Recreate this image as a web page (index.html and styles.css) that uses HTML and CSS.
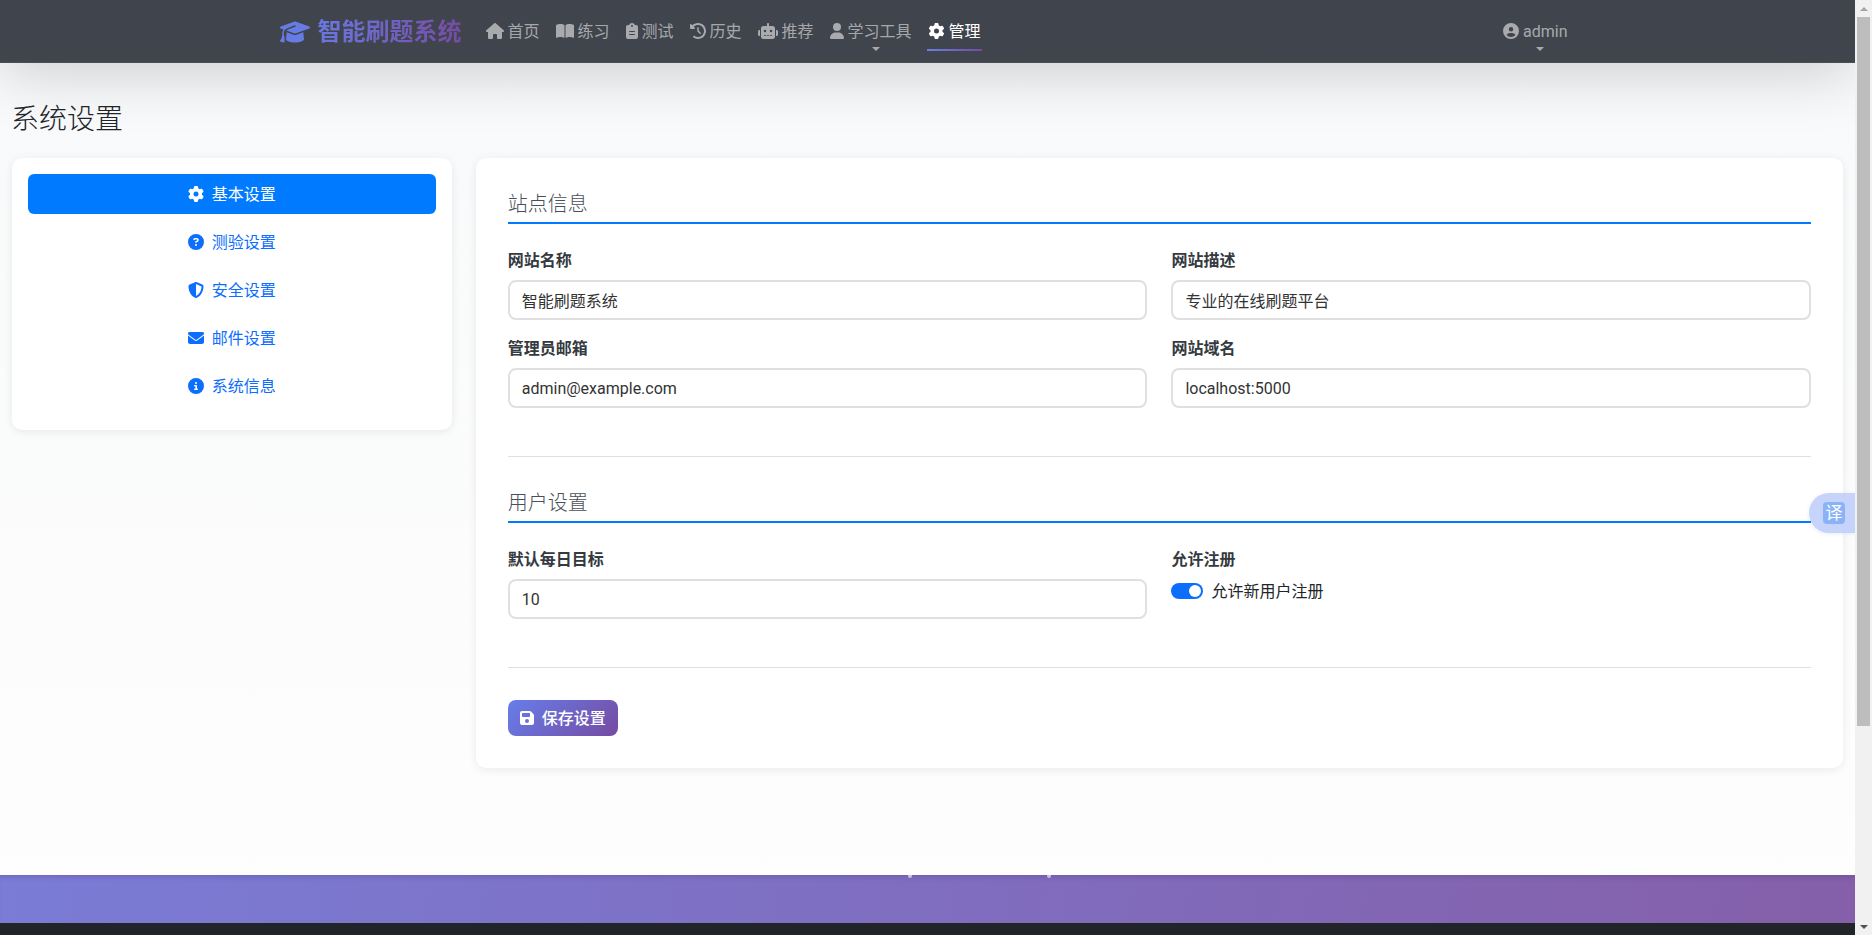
FILE: index.html
```html
<!DOCTYPE html>
<html lang="zh-CN">
<head>
<meta charset="utf-8">
<title>系统设置 - 智能刷题系统</title>
<link rel="stylesheet" href="styles.css">
</head>
<body>
<div class="shell">
  <div class="page">
    <header class="navbar">
      <div class="nav-container">
        <a class="brand" href="#">
          <svg class="brand-icon" viewBox="0 0 640 512"><path d="M320 32c-8.1 0-16.1 1.4-23.7 4.1L15.8 137.4C6.3 140.9 0 149.9 0 160s6.3 19.1 15.8 22.6l57.9 20.9C57.3 229.3 48 259.8 48 291.9v28.1c0 28.4-10.8 57.7-22.3 80.8c-6.5 13-13.9 25.8-22.5 37.6C0 442.7-.9 448.3 .9 453.4s6 8.9 11.2 10.2l64 16c4.2 1.1 8.7 .3 12.4-2s6.3-6.1 7.1-10.4c8.6-42.8 4.3-81.2-2.1-108.7C90.3 344.3 86 329.8 80 316.5V291.9c0-30.2 10.2-58.7 27.9-81.5c12.9-15.5 29.6-28 49.2-35.7l157-61.7c8.2-3.2 17.5 .8 20.7 9s-.8 17.5-9 20.7l-157 61.7c-12.4 4.9-23.3 12.4-32.2 21.6l159.6 57.6c7.6 2.7 15.6 4.1 23.7 4.1s16.1-1.4 23.7-4.1L624.2 182.6c9.5-3.4 15.8-12.5 15.8-22.6s-6.3-19.1-15.8-22.6L343.7 36.1C336.1 33.4 328.1 32 320 32zM128 408c0 35.3 86 72 192 72s192-36.7 192-72L496.7 262.6 354.5 314c-11.1 4-22.8 6-34.5 6s-23.5-2-34.5-6L143.3 262.6 128 408z"/></svg>
          <span class="brand-text">智能刷题系统</span>
        </a>
        <nav class="nav-list">
          <a class="nav-link" href="#"><span class="nav-row"><svg class="ni w18" viewBox="0 0 576 512"><path d="M575.8 255.5c0 18-15 32.1-32 32.1h-32l.7 160.2c0 2.7-.2 5.4-.5 8.1V472c0 22.1-17.9 40-40 40H456c-1.1 0-2.2 0-3.3-.1c-1.4 .1-2.8 .1-4.2 .1H416 392c-22.1 0-40-17.9-40-40V448 384c0-17.7-14.3-32-32-32H256c-17.7 0-32 14.3-32 32v64 24c0 22.1-17.9 40-40 40H160 128.1c-1.5 0-3-.1-4.5-.2c-1.2 .1-2.4 .2-3.6 .2H104c-22.1 0-40-17.9-40-40V360c0-.9 0-1.9 .1-2.8V287.6H32c-18 0-32-14-32-32.1c0-9 3-17 10-24L266.4 8c7-7 15-8 22-8s15 2 21 7L564.8 231.5c8 7 12 15 11 24z"/></svg>首页</span></a>
          <a class="nav-link" href="#"><span class="nav-row"><svg class="ni w18" viewBox="0 0 576 512"><path d="M249.6 471.5c10.8 3.8 22.4-4.1 22.4-15.5V78.6c0-4.2-1.6-8.4-5-11C247.4 52 202.4 32 144 32C93.5 32 46.3 45.3 18.1 56.1C6.8 60.5 0 71.7 0 83.8V454.1c0 11.9 12.8 20.2 24.1 16.5C55.6 460.1 105.5 448 144 448c33.9 0 79 14 105.6 23.5zm76.8 0C353 462 398.1 448 432 448c38.5 0 88.4 12.1 119.9 22.6c11.3 3.8 24.1-4.6 24.1-16.5V83.8c0-12.1-6.8-23.3-18.1-27.6C529.7 45.3 482.5 32 432 32c-58.4 0-103.4 20-123 35.6c-3.3 2.6-5 6.8-5 11V456c0 11.4 11.7 19.3 22.4 15.5z"/></svg>练习</span></a>
          <a class="nav-link" href="#"><span class="nav-row"><svg class="ni w12" viewBox="0 0 384 512"><path d="M192 0c-41.8 0-77.4 26.7-90.5 64H64C28.7 64 0 92.7 0 128V448c0 35.3 28.7 64 64 64H320c35.3 0 64-28.7 64-64V128c0-35.3-28.7-64-64-64H282.5C269.4 26.7 233.8 0 192 0zm0 64a32 32 0 1 1 0 64 32 32 0 1 1 0-64zM112 256H272c8.8 0 16 7.2 16 16s-7.2 16-16 16H112c-8.8 0-16-7.2-16-16s7.2-16 16-16zm0 96H272c8.8 0 16 7.2 16 16s-7.2 16-16 16H112c-8.8 0-16-7.2-16-16s7.2-16 16-16z"/></svg>测试</span></a>
          <a class="nav-link" href="#"><span class="nav-row"><svg class="ni w16" viewBox="0 0 512 512"><path d="M75 75L41 41C25.9 25.9 0 36.6 0 57.9V168c0 13.3 10.7 24 24 24H134.1c21.4 0 32.1-25.9 17-41l-30.8-30.8C155 85.5 203 64 256 64c106 0 192 86 192 192s-86 192-192 192c-40.8 0-78.6-12.7-109.7-34.4c-14.5-10.1-34.4-6.6-44.6 7.9s-6.6 34.4 7.9 44.6C151.2 495 201.7 512 256 512c141.4 0 256-114.6 256-256S397.4 0 256 0C185.3 0 121.3 28.7 75 75zm181 53c-13.3 0-24 10.7-24 24V256c0 6.4 2.5 12.5 7 17l72 72c9.4 9.4 24.6 9.4 33.9 0s9.4-24.6 0-33.9l-65-65V152c0-13.3-10.7-24-24-24z"/></svg>历史</span></a>
          <a class="nav-link" href="#"><span class="nav-row"><svg class="ni w20" viewBox="0 0 640 512"><path d="M320 0c17.7 0 32 14.3 32 32V96H472c39.8 0 72 32.2 72 72V440c0 39.8-32.2 72-72 72H168c-39.8 0-72-32.2-72-72V168c0-39.8 32.2-72 72-72H288V32c0-17.7 14.3-32 32-32zM208 384c-8.8 0-16 7.2-16 16s7.2 16 16 16h32c8.8 0 16-7.2 16-16s-7.2-16-16-16H208zm96 0c-8.8 0-16 7.2-16 16s7.2 16 16 16h32c8.8 0 16-7.2 16-16s-7.2-16-16-16H304zm96 0c-8.8 0-16 7.2-16 16s7.2 16 16 16h32c8.8 0 16-7.2 16-16s-7.2-16-16-16H400zM264 256a40 40 0 1 0 -80 0 40 40 0 1 0 80 0zm152 40a40 40 0 1 0 0-80 40 40 0 1 0 0 80zM48 224H64V416H48c-26.5 0-48-21.5-48-48V272c0-26.5 21.5-48 48-48zm544 0c26.5 0 48 21.5 48 48v96c0 26.5-21.5 48-48 48H576V224h16z"/></svg>推荐</span></a>
          <a class="nav-link" href="#"><span class="nav-row"><svg class="ni w14" viewBox="0 0 448 512"><path d="M224 256A128 128 0 1 0 224 0a128 128 0 1 0 0 256zm-45.7 48C79.8 304 0 383.8 0 482.3C0 498.7 13.3 512 29.7 512H418.3c16.4 0 29.7-13.3 29.7-29.7C448 383.8 368.2 304 269.7 304H178.3z"/></svg>学习工具</span><i class="caret"></i></a>
          <a class="nav-link active" href="#"><span class="nav-row"><svg class="ni w17" viewBox="0 0 512 512"><path d="M495.9 166.6c3.2 8.7 .5 18.4-6.4 24.6l-43.3 39.4c1.1 8.3 1.7 16.8 1.7 25.4s-.6 17.1-1.7 25.4l43.3 39.4c6.9 6.2 9.6 15.9 6.4 24.6c-4.4 11.9-9.7 23.3-15.8 34.3l-4.7 8.1c-6.6 11-14 21.4-22.1 31.2c-5.9 7.2-15.7 9.6-24.5 6.8l-55.7-17.7c-13.4 10.3-28.2 18.9-44 25.4l-12.5 57.1c-2 9.1-9 16.3-18.2 17.8c-13.8 2.3-28 3.5-42.5 3.5s-28.7-1.2-42.5-3.5c-9.2-1.5-16.2-8.7-18.2-17.8l-12.5-57.1c-15.8-6.5-30.6-15.1-44-25.4L83.1 425.9c-8.8 2.8-18.6 .3-24.5-6.8c-8.1-9.8-15.5-20.2-22.1-31.2l-4.7-8.1c-6.1-11-11.4-22.4-15.8-34.3c-3.2-8.7-.5-18.4 6.4-24.6l43.3-39.4C64.6 273.1 64 264.6 64 256s.6-17.1 1.7-25.4L22.4 191.2c-6.9-6.2-9.6-15.9-6.4-24.6c4.4-11.9 9.7-23.3 15.8-34.3l4.7-8.1c6.6-11 14-21.4 22.1-31.2c5.9-7.2 15.7-9.6 24.5-6.8l55.7 17.7c13.4-10.3 28.2-18.9 44-25.4l12.5-57.1c2-9.1 9-16.3 18.2-17.8C227.3 1.2 241.5 0 256 0s28.7 1.2 42.5 3.5c9.2 1.5 16.2 8.7 18.2 17.8l12.5 57.1c15.8 6.5 30.6 15.1 44 25.4l55.7-17.7c8.8-2.8 18.6-.3 24.5 6.8c8.1 9.8 15.5 20.2 22.1 31.2l4.7 8.1c6.1 11 11.4 22.4 15.8 34.3zM256 336a80 80 0 1 0 0-160 80 80 0 1 0 0 160z"/></svg>管理</span></a>
        </nav>
        <a class="nav-link user-link" href="#"><span class="nav-row"><svg class="ni w16" viewBox="0 0 512 512"><path d="M399 384.2C376.9 345.8 335.4 320 288 320H224c-47.4 0-88.9 25.8-111 64.2c35.2 39.2 86.2 63.8 143 63.8s107.8-24.7 143-63.8zM0 256a256 256 0 1 1 512 0A256 256 0 1 1 0 256zm256 16a72 72 0 1 0 0-144 72 72 0 1 0 0 144z"/></svg>admin</span><i class="caret"></i></a>
      </div>
    </header>

    <main class="content">
      <h1 class="page-title">系统设置</h1>
      <div class="layout">
        <aside class="card side-card">
          <a class="side-link active" href="#"><svg class="si" viewBox="0 0 512 512"><path d="M495.9 166.6c3.2 8.7 .5 18.4-6.4 24.6l-43.3 39.4c1.1 8.3 1.7 16.8 1.7 25.4s-.6 17.1-1.7 25.4l43.3 39.4c6.9 6.2 9.6 15.9 6.4 24.6c-4.4 11.9-9.7 23.3-15.8 34.3l-4.7 8.1c-6.6 11-14 21.4-22.1 31.2c-5.9 7.2-15.7 9.6-24.5 6.8l-55.7-17.7c-13.4 10.3-28.2 18.9-44 25.4l-12.5 57.1c-2 9.1-9 16.3-18.2 17.8c-13.8 2.3-28 3.5-42.5 3.5s-28.7-1.2-42.5-3.5c-9.2-1.5-16.2-8.7-18.2-17.8l-12.5-57.1c-15.8-6.5-30.6-15.1-44-25.4L83.1 425.9c-8.8 2.8-18.6 .3-24.5-6.8c-8.1-9.8-15.5-20.2-22.1-31.2l-4.7-8.1c-6.1-11-11.4-22.4-15.8-34.3c-3.2-8.7-.5-18.4 6.4-24.6l43.3-39.4C64.6 273.1 64 264.6 64 256s.6-17.1 1.7-25.4L22.4 191.2c-6.9-6.2-9.6-15.9-6.4-24.6c4.4-11.9 9.7-23.3 15.8-34.3l4.7-8.1c6.6-11 14-21.4 22.1-31.2c5.9-7.2 15.7-9.6 24.5-6.8l55.7 17.7c13.4-10.3 28.2-18.9 44-25.4l12.5-57.1c2-9.1 9-16.3 18.2-17.8C227.3 1.2 241.5 0 256 0s28.7 1.2 42.5 3.5c9.2 1.5 16.2 8.7 18.2 17.8l12.5 57.1c15.8 6.5 30.6 15.1 44 25.4l55.7-17.7c8.8-2.8 18.6-.3 24.5 6.8c8.1 9.8 15.5 20.2 22.1 31.2l4.7 8.1c6.1 11 11.4 22.4 15.8 34.3zM256 336a80 80 0 1 0 0-160 80 80 0 1 0 0 160z"/></svg>基本设置</a>
          <a class="side-link" href="#"><svg class="si" viewBox="0 0 512 512"><path d="M256 512A256 256 0 1 0 256 0a256 256 0 1 0 0 512zM169.8 165.3c7.9-22.3 29.1-37.3 52.8-37.3h58.3c34.9 0 63.1 28.3 63.1 63.1c0 22.6-12.1 43.5-31.7 54.8L280 264.4c-.2 13-10.9 23.6-24 23.6c-13.3 0-24-10.7-24-24V250.5c0-8.6 4.6-16.5 12.1-20.8l44.3-25.4c4.7-2.7 7.6-7.7 7.6-13.1c0-8.4-6.8-15.1-15.1-15.1H222.6c-3.4 0-6.4 2.1-7.5 5.3l-.4 1.2c-4.4 12.5-18.2 19-30.6 14.6s-19-18.2-14.6-30.6l.4-1.2zM224 352a32 32 0 1 1 64 0 32 32 0 1 1 -64 0z"/></svg>测验设置</a>
          <a class="side-link" href="#"><svg class="si" viewBox="0 0 512 512"><path d="M256 0c4.6 0 9.2 1 13.4 2.9L457.7 82.8c22 9.3 38.4 31 38.3 57.2c-.5 99.2-41.3 280.7-213.6 363.2c-16.7 8-36.1 8-52.8 0C57.3 420.7 16.5 239.2 16 140c-.1-26.2 16.3-47.9 38.3-57.2L242.7 2.9C246.8 1 251.4 0 256 0zm0 66.8V444.8C394 378 431.1 230.1 432 141.4L256 66.8l0 0z"/></svg>安全设置</a>
          <a class="side-link" href="#"><svg class="si" viewBox="0 0 512 512"><path d="M48 64C21.5 64 0 85.5 0 112c0 15.1 7.1 29.3 19.2 38.4L236.8 313.6c11.4 8.5 27 8.5 38.4 0L492.8 150.4c12.1-9.1 19.2-23.3 19.2-38.4c0-26.5-21.5-48-48-48H48zM0 176V384c0 35.3 28.7 64 64 64H448c35.3 0 64-28.7 64-64V176L294.4 339.2c-22.8 17.1-54 17.1-76.8 0L0 176z"/></svg>邮件设置</a>
          <a class="side-link" href="#"><svg class="si" viewBox="0 0 512 512"><path d="M256 512A256 256 0 1 0 256 0a256 256 0 1 0 0 512zM216 336h24V272H216c-13.3 0-24-10.7-24-24s10.7-24 24-24h48c13.3 0 24 10.7 24 24v88h8c13.3 0 24 10.7 24 24s-10.7 24-24 24H216c-13.3 0-24-10.7-24-24s10.7-24 24-24zm40-208a32 32 0 1 1 0 64 32 32 0 1 1 0-64z"/></svg>系统信息</a>
        </aside>

        <section class="card main-card">
          <h2 class="section-title">站点信息</h2>
          <div class="form-grid">
            <div class="field"><label class="field-label">网站名称</label><input class="input" type="text" value="智能刷题系统"></div>
            <div class="field"><label class="field-label">网站描述</label><input class="input" type="text" value="专业的在线刷题平台"></div>
            <div class="field"><label class="field-label">管理员邮箱</label><input class="input" type="text" value="admin@example.com"></div>
            <div class="field"><label class="field-label">网站域名</label><input class="input" type="text" value="localhost:5000"></div>
          </div>
          <hr class="divider">
          <h2 class="section-title">用户设置</h2>
          <div class="form-grid">
            <div class="field"><label class="field-label">默认每日目标</label><input class="input" type="text" value="10"></div>
            <div class="field"><label class="field-label">允许注册</label>
              <div class="switch-row"><input class="switch" type="checkbox" checked><span class="switch-text">允许新用户注册</span></div>
            </div>
          </div>
          <hr class="divider">
          <button class="save-btn" type="button"><svg class="save-icon" viewBox="0 0 448 512"><path d="M64 32C28.7 32 0 60.7 0 96V416c0 35.3 28.7 64 64 64H384c35.3 0 64-28.7 64-64V173.3c0-17-6.7-33.3-18.7-45.3L352 50.7C340 38.7 323.7 32 306.7 32H64zm0 96c0-17.7 14.3-32 32-32H288c17.7 0 32 14.3 32 32v64c0 17.7-14.3 32-32 32H96c-17.7 0-32-14.3-32-32V128zM224 288a64 64 0 1 1 0 128 64 64 0 1 1 0-128z"/></svg>保存设置</button>
        </section>
      </div>
    </main>

    <footer class="footer">
      <div class="footer-band"><i class="dot dot-a"></i><i class="dot dot-b"></i></div>
      <div class="footer-dark"></div>
    </footer>

    <div class="translate-tab"><span class="translate-box">译</span></div>
  </div>

  <div class="scrollbar">
    <div class="sb-btn"><i class="sb-up"></i></div>
    <div class="sb-track"><div class="sb-thumb"></div></div>
    <div class="sb-btn"><i class="sb-down"></i></div>
  </div>
</div>
</body>
</html>
```
FILE: styles.css
```css
* { box-sizing: border-box; }
html, body { margin: 0; height: 100%; overflow: hidden; }
body {
  font-family: Roboto, "Noto Sans CJK SC", sans-serif;
  font-size: 16px;
  line-height: 24px;
  color: #212529;
  background: #fff;
}
a { text-decoration: none; }

.shell { display: flex; height: 935px; }
.page {
  position: relative;
  flex: 1;
  min-width: 0;
  display: flex;
  flex-direction: column;
  overflow: hidden;
  background: linear-gradient(180deg, #f8f9fa 0%, #fefefe 100%);
}

/* navbar */
.navbar {
  position: relative;
  z-index: 2;
  height: 63px;
  flex: none;
  background: #40444c;
  border-bottom: 1px solid #4a4e55;
  box-shadow: 0 10px 60px rgba(0, 0, 0, .18);
}
.nav-container {
  width: 1320px;
  margin: 0 auto;
  padding: 11px 12px 0;
  display: flex;
  align-items: flex-start;
}
.brand {
  display: flex;
  align-items: center;
  height: 40px;
  margin-right: 16px;
}
.brand-icon { width: 30px; height: 24px; margin: 2px 8px 0 0; fill: #667ce4; flex: none; }
.brand-text {
  padding-top: 2px;
  font-size: 24px;
  font-weight: 700;
  line-height: 30px;
  background: linear-gradient(100deg, #6a78e2 0%, #764ba2 100%);
  -webkit-background-clip: text;
  background-clip: text;
  color: transparent;
}
.nav-list { display: flex; flex: 1; }
.nav-link {
  display: flex;
  flex-direction: column;
  align-items: center;
  height: 40px;
  padding: 8px 8px 0;
  color: rgba(255, 255, 255, .55);
}
.nav-row { display: flex; align-items: center; height: 24px; padding-top: 2px; white-space: nowrap; }
.ni { height: 16px; margin: -2px 4px 0 0; fill: currentColor; flex: none; }
.w12 { width: 12px; }
.w14 { width: 14px; }
.w16 { width: 16px; }
.w17 { width: 17px; }
.w18 { width: 18px; }
.w20 { width: 20px; }
.caret {
  width: 0;
  height: 0;
  margin: 4px 0 0 10px;
  border-top: 4px solid currentColor;
  border-left: 4px solid transparent;
  border-right: 4px solid transparent;
}
.nav-link.active {
  position: relative;
  color: #fff;
  padding: 8px 0 0;
  margin-left: 7px;
  width: 55px;
}
.nav-link.active::after {
  content: "";
  position: absolute;
  left: 0;
  right: 0;
  bottom: 0;
  height: 2px;
  background: linear-gradient(90deg, #667eea, #764ba2);
}

/* content */
.content { flex: 1; padding: 40px 12px 0; }
.page-title {
  margin: 0 0 21px -1px;
  font-size: 28px;
  font-weight: 300;
  line-height: 34px;
  color: #212529;
}
.layout {
  display: grid;
  grid-template-columns: calc(25% - 18px) 1fr;
  column-gap: 24px;
  align-items: start;
}
.card {
  background: #fff;
  border-radius: 10px;
  box-shadow: 0 2px 10px rgba(0, 0, 0, .08);
}
.side-card { padding: 16px; display: flex; flex-direction: column; gap: 8px; }
.side-card::after { content: ""; height: 0; }
.side-link {
  display: flex;
  align-items: center;
  justify-content: center;
  height: 40px;
  padding-top: 2px;
  border-radius: 6px;
  color: #0d6efd;
}
.side-link.active { background: #007bff; color: #fff; }
.si { width: 16px; height: 16px; margin: -2px 8px 0 0; fill: currentColor; flex: none; }

.main-card { padding: 32px; }
.section-title {
  margin: 0 0 24px;
  padding: 2px 0 6px;
  border-bottom: 2px solid #007bff;
  font-size: 20px;
  font-weight: 300;
  line-height: 24px;
  color: #495057;
}
.form-grid { display: grid; grid-template-columns: 1fr 1fr; column-gap: 24px; }
.field { margin-bottom: 16px; min-width: 0; }
.field-label {
  display: block;
  margin-bottom: 7px;
  padding-top: 1px;
  font-weight: 600;
  color: #343a40;
}
.input {
  display: block;
  width: 100%;
  height: 40px;
  padding: 0 12px;
  border: 2px solid #e0e0e0;
  border-radius: 8px;
  background: #fff;
  font: inherit;
  color: #333;
  outline: none;
}
.divider {
  height: 1px;
  margin: 32px 0;
  border: 0;
  background: #e0e0e0;
}
.switch-row { display: flex; align-items: center; gap: 8px; height: 24px; color: #212529; }
.switch-text { padding-top: 2px; }
.switch {
  appearance: none;
  -webkit-appearance: none;
  position: relative;
  width: 32px;
  height: 16px;
  margin: 0;
  border-radius: 8px;
  background: #0d6efd;
  flex: none;
}
.switch::after {
  content: "";
  position: absolute;
  top: 2px;
  right: 2px;
  width: 12px;
  height: 12px;
  border-radius: 50%;
  background: #fff;
}
.save-btn {
  display: flex;
  align-items: center;
  width: 110px;
  height: 36px;
  padding: 2px 12px 0;
  border: 0;
  border-radius: 8px;
  background: linear-gradient(135deg, #667eea, #764ba2);
  color: #fff;
  font: inherit;
  font-weight: 500;
}
.save-icon { width: 14px; height: 16px; margin: -2px 8px 0 0; fill: currentColor; flex: none; }

/* footer */
.footer { flex: none; }
.footer-band {
  position: relative;
  height: 48px;
  background: linear-gradient(95deg, #7a7cd6 0%, #855fa9 100%);
  box-shadow: inset 0 5px 5px -3px rgba(60, 40, 110, .22);
}
.dot {
  position: absolute;
  top: 0;
  width: 4px;
  height: 3px;
  background: rgba(255, 255, 255, .6);
  border-radius: 0 0 2px 2px;
}
.dot-a { left: 908px; }
.dot-b { left: 1047px; }
.footer-dark { height: 12px; background: #212529; }

/* translate tab */
.translate-tab {
  position: absolute;
  top: 493px;
  right: 0;
  width: 46px;
  height: 40px;
  padding: 9px 10px 9px 14px;
  border-radius: 20px 0 0 20px;
  background: rgba(190, 206, 252, .88);
  box-shadow: 0 1px 4px rgba(80, 110, 220, .12);
}
.translate-box {
  display: block;
  width: 22px;
  height: 22px;
  border-radius: 4px;
  background: #8ab3f7;
  color: #fff;
  font-size: 17px;
  line-height: 22px;
  text-align: center;
}

/* scrollbar */
.scrollbar {
  width: 17px;
  flex: none;
  display: flex;
  flex-direction: column;
  background: #f1f1f1;
}
.sb-btn { height: 17px; flex: none; display: flex; align-items: center; justify-content: center; }
.sb-up, .sb-down { width: 0; height: 0; border-left: 4px solid transparent; border-right: 4px solid transparent; }
.sb-up { border-bottom: 4px solid #a3a3a3; }
.sb-down { border-top: 4px solid #505050; }
.sb-track { flex: 1; padding: 0 2px; }
.sb-thumb { height: 709px; background: #bdbdbd; }
```
